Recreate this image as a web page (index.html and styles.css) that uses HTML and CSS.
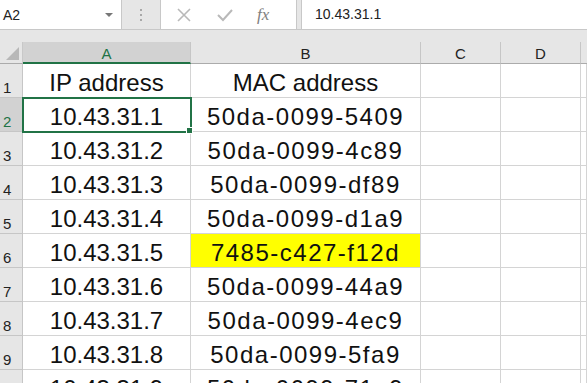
FILE: index.html
```html
<!DOCTYPE html>
<html lang="en">
<head>
    <meta charset="UTF-8">
    <title>Sheet</title>
    <link rel="stylesheet" href="styles.css">
</head>
<body>
    <div class="formula-bar">
        <div class="name-box">
            <span>A2</span>
            <span class="drop"></span>
        </div>
        <div class="grip"><i></i><i></i><i></i></div>
        <div class="fx-buttons">
            <svg width="18" height="18" viewBox="0 0 18 18"><path d="M3 3 L15 15 M15 3 L3 15" stroke="#b9b9b9" stroke-width="1.6" fill="none"/></svg>
            <svg width="20" height="18" viewBox="0 0 20 18"><path d="M3 9 L8 14 L17 4" stroke="#b9b9b9" stroke-width="2" fill="none"/></svg>
            <span class="fx">fx</span>
        </div>
        <div class="formula-input">10.43.31.1</div>
    </div>

    <div class="sheet">
        <div class="corner"></div>
        <div class="col-head active">A</div>
        <div class="col-head">B</div>
        <div class="col-head">C</div>
        <div class="col-head">D</div>
        <div class="col-head edge"></div>

        <div class="row-head">1</div>
        <div class="cell">IP address</div>
        <div class="cell">MAC address</div>
        <div class="cell"></div><div class="cell"></div><div class="cell"></div>

        <div class="row-head active">2</div>
        <div class="cell selected">10.43.31.1<span class="handle"></span></div>
        <div class="cell mac">50da-0099-5409</div>
        <div class="cell"></div><div class="cell"></div><div class="cell"></div>

        <div class="row-head">3</div>
        <div class="cell">10.43.31.2</div>
        <div class="cell mac">50da-0099-4c89</div>
        <div class="cell"></div><div class="cell"></div><div class="cell"></div>

        <div class="row-head">4</div>
        <div class="cell">10.43.31.3</div>
        <div class="cell mac">50da-0099-df89</div>
        <div class="cell"></div><div class="cell"></div><div class="cell"></div>

        <div class="row-head">5</div>
        <div class="cell">10.43.31.4</div>
        <div class="cell mac">50da-0099-d1a9</div>
        <div class="cell"></div><div class="cell"></div><div class="cell"></div>

        <div class="row-head">6</div>
        <div class="cell">10.43.31.5</div>
        <div class="cell mac highlight">7485-c427-f12d</div>
        <div class="cell"></div><div class="cell"></div><div class="cell"></div>

        <div class="row-head">7</div>
        <div class="cell">10.43.31.6</div>
        <div class="cell mac">50da-0099-44a9</div>
        <div class="cell"></div><div class="cell"></div><div class="cell"></div>

        <div class="row-head">8</div>
        <div class="cell">10.43.31.7</div>
        <div class="cell mac">50da-0099-4ec9</div>
        <div class="cell"></div><div class="cell"></div><div class="cell"></div>

        <div class="row-head">9</div>
        <div class="cell">10.43.31.8</div>
        <div class="cell mac">50da-0099-5fa9</div>
        <div class="cell"></div><div class="cell"></div><div class="cell"></div>

        <div class="row-head">10</div>
        <div class="cell">10.43.31.9</div>
        <div class="cell mac">50da-0099-71a9</div>
        <div class="cell"></div><div class="cell"></div><div class="cell"></div>
    </div>
</body>
</html>
```

FILE: styles.css
```css
html, body {
    margin: 0;
    height: 100%;
    overflow: hidden;
    background-color: #e6e6e6;
    font-family: "Liberation Sans", Arial, sans-serif;
}
.formula-bar {
    display: flex;
    height: 30px;
    background-color: #e6e6e6;
    border-bottom: 1px solid #c8c8c8;
    box-sizing: border-box;
}
.name-box {
    width: 122px;
    background-color: white;
    border-right: 1px solid #c8c8c8;
    display: flex;
    align-items: center;
    justify-content: space-between;
    padding: 0 8px 0 3px;
    box-sizing: border-box;
    font-size: 14px;
    color: #222;
}
.drop {
    width: 0;
    height: 0;
    border-left: 4px solid transparent;
    border-right: 4px solid transparent;
    border-top: 4px solid #777;
}
.grip {
    width: 38px;
    display: flex;
    flex-direction: column;
    align-items: center;
    justify-content: center;
    gap: 3px;
}
.grip i {
    width: 2px;
    height: 2px;
    background-color: #a8a8a8;
}
.fx-buttons {
    width: 137px;
    background-color: white;
    border-left: 1px solid #c8c8c8;
    border-right: 1px solid #c8c8c8;
    display: flex;
    align-items: center;
    gap: 22px;
    padding-left: 14px;
    box-sizing: border-box;
}
.fx {
    font-family: "Liberation Serif", serif;
    font-style: italic;
    font-size: 17px;
    color: #808080;
}
.formula-input {
    flex: 1;
    margin-left: 4px;
    background-color: white;
    border-left: 1px solid #c8c8c8;
    padding-left: 13px;
    font-size: 14px;
    line-height: 29px;
    color: #222;
}
.sheet {
    margin-top: 12px;
    display: grid;
    grid-template-columns: 23px 168px 230px 80px 80px 6px;
    grid-template-rows: 22px repeat(10, 34px);
    background-color: white;
}
.corner {
    background-color: #e6e6e6;
    border-right: 1px solid #c8c8c8;
    border-bottom: 1px solid #ababab;
    position: relative;
}
.corner::after {
    content: "";
    position: absolute;
    right: 3px;
    bottom: 3px;
    border-left: 13px solid transparent;
    border-bottom: 13px solid #b8b8b8;
}
.col-head {
    background-color: #e6e6e6;
    border-right: 1px solid #c6c6c6;
    border-bottom: 1px solid #ababab;
    font-size: 15px;
    color: #222;
    text-align: center;
    line-height: 24px;
}
.col-head.active {
    background-color: #d2d2d2;
    color: #217346;
    border-bottom: 2px solid #217346;
    line-height: 23px;
}
.col-head.edge {
    border-right: none;
}
.row-head {
    background-color: #e6e6e6;
    border-right: 1px solid #c6c6c6;
    border-bottom: 1px solid #c6c6c6;
    font-size: 15px;
    color: #222;
    padding-left: 3px;
    display: flex;
    align-items: flex-end;
    padding-bottom: 1px;
}
.row-head.active {
    background-color: #d2d2d2;
    color: #217346;
}
.cell {
    border-right: 1px solid #d4d4d4;
    border-bottom: 1px solid #d4d4d4;
    font-size: 24px;
    line-height: 26px;
    color: #111;
    display: flex;
    align-items: flex-end;
    justify-content: center;
    padding-bottom: 1px;
    white-space: nowrap;
    position: relative;
}
.cell.mac {
    letter-spacing: 1.5px;
}
.cell.highlight {
    background-color: #ffff00;
}
.cell.selected {
    outline: 2px solid #217346;
    outline-offset: -1px;
    z-index: 1;
}
.handle {
    position: absolute;
    right: -3px;
    bottom: -3px;
    width: 5px;
    height: 5px;
    background-color: #217346;
    border: 1px solid white;
}
```
